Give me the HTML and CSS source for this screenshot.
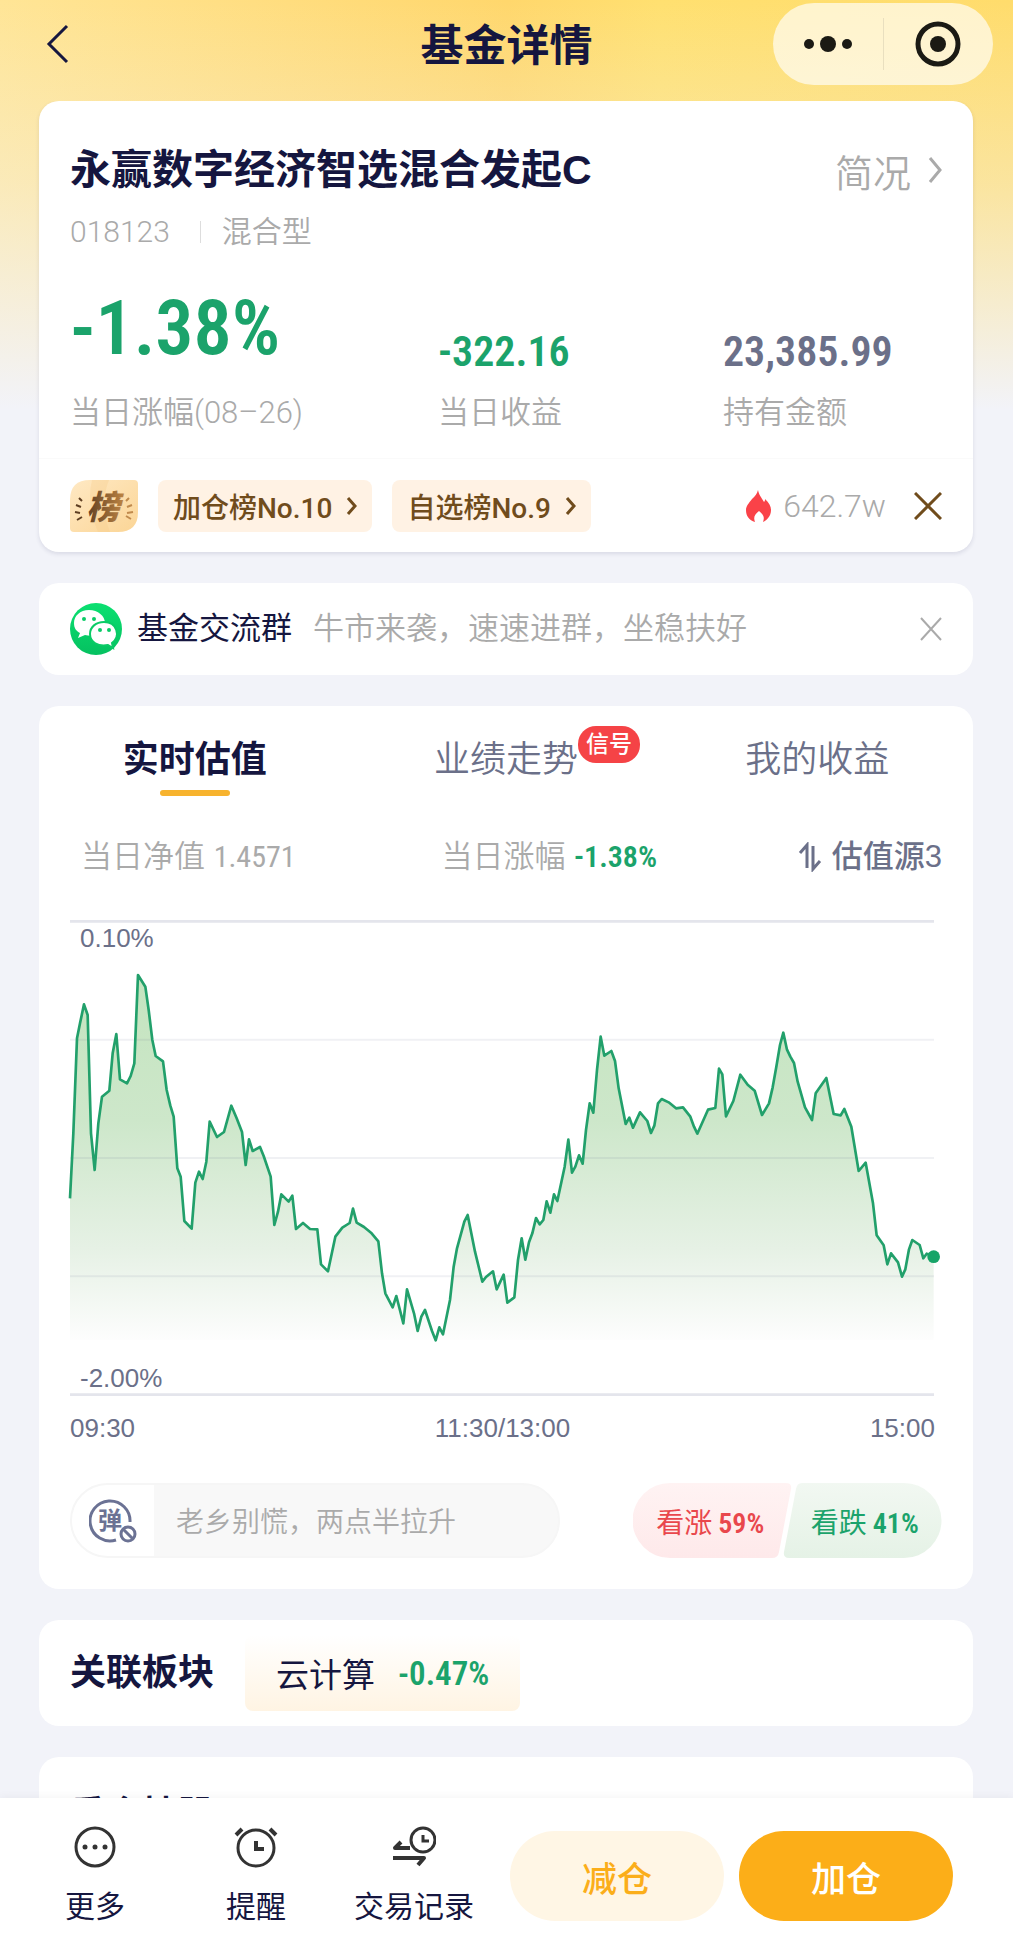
FILE: index.html
```html
<!DOCTYPE html>
<html lang="zh-CN">
<head>
    <meta charset="UTF-8">
    <meta name="viewport" content="width=device-width, initial-scale=1.0">
    <title>基金详情</title>
    <link rel="stylesheet" href="styles.css">
</head>
<body>

<header class="topbar">
    <button type="button" class="back" aria-label="返回">
        <svg width="24" height="40" viewBox="0 0 24 40"><path d="M21 2 3 20l18 18" fill="none" stroke="#15163f" stroke-width="3"/></svg>
    </button>
    <h1>基金详情</h1>
    <div class="capsule">
        <button type="button" aria-label="菜单">
            <svg width="50" height="20" viewBox="0 0 50 20" fill="#1b1a14"><circle cx="6" cy="10" r="5"/><circle cx="25" cy="10" r="8"/><circle cx="44" cy="10" r="5"/></svg>
        </button>
        <button type="button" aria-label="关闭小程序">
            <svg width="46" height="46" viewBox="0 0 46 46"><circle cx="23" cy="23" r="20" fill="none" stroke="#1b1a14" stroke-width="5"/><circle cx="23" cy="23" r="8" fill="#1b1a14"/></svg>
        </button>
    </div>
</header>

<main>
    <section class="card fund">
        <div class="fund-head">
            <h2>永赢数字经济智选混合发起C</h2>
            <a href="#profile">简况
                <svg width="14" height="28" viewBox="0 0 14 28"><path d="M2 2l10 12L2 26" fill="none" stroke="#aaa" stroke-width="3"/></svg>
            </a>
        </div>
        <p class="fund-code"><span>018123</span><span>混合型</span></p>
        <dl class="fund-stats">
            <div>
                <dt>当日涨幅(08–26)</dt>
                <dd class="num big down">-1.38%</dd>
            </div>
            <div>
                <dt>当日收益</dt>
                <dd class="num down">-322.16</dd>
            </div>
            <div>
                <dt>持有金额</dt>
                <dd class="num">23,385.99</dd>
            </div>
        </dl>
        <div class="ranks">
            <svg class="rank-badge" width="68" height="52" viewBox="0 0 68 52">
                <defs>
                    <linearGradient id="badgeBg" x1="0" y1="0" x2="1" y2="1"><stop offset="0" stop-color="#ffe9c4"/><stop offset="1" stop-color="#fbd596"/></linearGradient>
                    <linearGradient id="badgeText"><stop offset="0" stop-color="#5f3f22"/><stop offset="1" stop-color="#bd8443"/></linearGradient>
                </defs>
                <path d="M20 0h44q4 0 4 4v28q0 20-20 20H4q-4 0-4-4V20Q0 0 20 0z" fill="url(#badgeBg)"/>
                <path d="M22 0h17q-10 26 1 52H28Q16 24 22 0z" fill="#f5c987" opacity=".3"/>
                <path d="M9 18l3 3M6 25l5 2M5 32l5 1M7 40l5-3" stroke="#5f3f22" stroke-width="2"/>
                <path d="M59 18l-3 3M62 25l-5 2M63 32l-6 1M61 39l-5-3" stroke="#c08a4d" stroke-width="2"/>
                <text x="33" y="39" text-anchor="middle" fill="url(#badgeText)">榜</text>
            </svg>
            <a class="rank" href="#rank-add">加仓榜No.10
                <svg width="11" height="18" viewBox="0 0 11 18"><path d="M2 1l7 8-7 8" fill="none" stroke="#704c1c" stroke-width="3"/></svg>
            </a>
            <a class="rank" href="#rank-pick">自选榜No.9
                <svg width="11" height="18" viewBox="0 0 11 18"><path d="M2 1l7 8-7 8" fill="none" stroke="#704c1c" stroke-width="3"/></svg>
            </a>
            <span class="heat">
                <svg width="26" height="32" viewBox="0 0 26 32"><path d="M12 0c1 5 3 7 6 12 1-1 1-2 1-3 4 4 6 7 6 11 0 6-4 10-8 12 2-5 0-8-4-11-4 3-6 6-4 11C3 30 0 26 0 20c0-4 3-7 6-11 3-3 5-5 6-9z" fill="#fa4248"/></svg>
                642.7w
            </span>
            <button type="button" class="close" aria-label="关闭榜单">
                <svg width="28" height="28" viewBox="0 0 28 28"><path d="M1 1l26 26M27 1 1 27" stroke="#704c1c" stroke-width="3"/></svg>
            </button>
        </div>
    </section>

    <section class="card group">
        <svg width="52" height="52" viewBox="0 0 52 52">
            <defs><linearGradient id="wx" x1="0" y1="0" x2="0" y2="1"><stop offset="0" stop-color="#0be071"/><stop offset="1" stop-color="#05c160"/></linearGradient></defs>
            <circle cx="26" cy="26" r="26" fill="url(#wx)"/>
            <path d="M19 7C10 7 4 13 4 20c0 5 2 8 6 10l-2 5 7-3c11 3 20-3 20-12 0-7-7-13-16-13z" fill="#fff"/>
            <path d="M34 19c-8 0-14 5-14 12 0 8 8 13 18 11l5 3-1-5c9-7 5-21-8-21z" fill="#fff" stroke="#0acb66" stroke-width="2"/>
            <g fill="#0acb66"><circle cx="14" cy="16" r="2"/><circle cx="24" cy="16" r="2"/><circle cx="30" cy="27" r="2"/><circle cx="39" cy="27" r="2"/></g>
        </svg>
        <strong>基金交流群</strong>
        <span>牛市来袭，速速进群，坐稳扶好</span>
        <button type="button" class="close" aria-label="关闭">
            <svg width="22" height="24" viewBox="0 0 22 24"><path d="M1 1l20 22M21 1 1 23" stroke="#aaa" stroke-width="2"/></svg>
        </button>
    </section>

    <section class="card trend">
        <nav class="tabs">
            <button type="button" class="active">实时估值</button>
            <button type="button"><span class="tab-name">业绩走势<i class="signal">信号</i></span></button>
            <button type="button">我的收益</button>
        </nav>
        <div class="quote">
            <p>当日净值 <span class="num">1.4571</span></p>
            <p>当日涨幅 <span class="num down">-1.38%</span></p>
            <button type="button" class="source">
                <svg width="24" height="30" viewBox="0 0 24 30"><path d="M2 11l7-8v23M15 4v23l7-8" fill="none" stroke="#6b7089" stroke-width="3"/></svg>
                估值源3
            </button>
        </div>
        <div class="chart">
            <span class="max">0.10%</span>
            <span class="min">-2.00%</span>
            <svg viewBox="30 60 2595 1428">
                <defs>
                    <linearGradient id="area" gradientUnits="userSpaceOnUse" x1="0" y1="225" x2="0" y2="1320">
                        <stop offset="0" stop-color="#c4e4bf"/>
                        <stop offset=".4" stop-color="#cde7ca"/>
                        <stop offset=".75" stop-color="#e6f1e5"/>
                        <stop offset="1" stop-color="#fdfdfd"/>
                    </linearGradient>
                </defs>
                <polygon fill="url(#area)" points="30,1320 30,895 40,700 51,415 60,370 72,313 83,345 93,700 104,810 115,670 126,590 148,572 158,460 169,402 180,538 201,550 212,528 223,490 234,225 256,260 266,330 277,420 287,468 309,484 320,570 331,617 341,650 352,805 362,830 373,963 395,986 406,848 417,815 428,837 439,785 449,665 471,711 492,696 514,617 530,655 546,696 557,795 567,718 578,753 600,741 611,768 632,830 643,975 654,935 664,883 686,905 697,887 708,987 729,969 750,987 772,988 783,1093 804,1114 826,1010 847,983 869,969 879,926 890,968 912,981 933,998 955,1024 966,1120 976,1180 998,1222 1009,1188 1030,1270 1041,1168 1062,1240 1073,1293 1084,1250 1095,1230 1116,1293 1127,1321 1138,1282 1149,1303 1170,1200 1181,1100 1191,1045 1213,965 1223,945 1245,1055 1267,1145 1278,1131 1299,1114 1310,1168 1331,1124 1342,1208 1363,1192 1374,1080 1385,1015 1396,1079 1407,1027 1417,1000 1428,954 1439,973 1450,960 1460,904 1471,938 1482,883 1492,903 1514,800 1525,719 1536,818 1546,800 1557,766 1568,791 1578,690 1589,610 1600,638 1611,510 1622,410 1633,467 1654,453 1665,483 1676,565 1697,672 1708,653 1719,683 1740,637 1762,663 1773,699 1783,677 1794,610 1805,597 1826,607 1848,625 1869,622 1891,650 1902,680 1912,701 1944,629 1966,624 1977,506 1987,523 1998,649 2020,603 2041,524 2063,554 2084,572 2106,645 2127,610 2138,562 2149,500 2160,435 2170,398 2181,449 2191,470 2202,489 2213,545 2235,622 2256,660 2267,580 2299,534 2321,642 2342,646 2353,627 2374,680 2396,813 2417,788 2439,910 2450,1006 2471,1036 2482,1093 2493,1060 2514,1087 2526,1130 2536,1108 2547,1048 2557,1020 2579,1035 2590,1075 2600,1061 2621,1070 2621,1320"/>
                <g stroke="#5a5f82" stroke-opacity=".09" stroke-width="6">
                    <path d="M30 419h2592M30 774h2592M30 1129h2592"/>
                </g>
                <path d="M30 64h2592M30 1484h2592" stroke="#e4e5ec" stroke-width="8"/>
                <polyline fill="none" stroke="#22a06b" stroke-width="8" stroke-linejoin="round" points="30,895 40,700 51,415 60,370 72,313 83,345 93,700 104,810 115,670 126,590 148,572 158,460 169,402 180,538 201,550 212,528 223,490 234,225 256,260 266,330 277,420 287,468 309,484 320,570 331,617 341,650 352,805 362,830 373,963 395,986 406,848 417,815 428,837 439,785 449,665 471,711 492,696 514,617 530,655 546,696 557,795 567,718 578,753 600,741 611,768 632,830 643,975 654,935 664,883 686,905 697,887 708,987 729,969 750,987 772,988 783,1093 804,1114 826,1010 847,983 869,969 879,926 890,968 912,981 933,998 955,1024 966,1120 976,1180 998,1222 1009,1188 1030,1270 1041,1168 1062,1240 1073,1293 1084,1250 1095,1230 1116,1293 1127,1321 1138,1282 1149,1303 1170,1200 1181,1100 1191,1045 1213,965 1223,945 1245,1055 1267,1145 1278,1131 1299,1114 1310,1168 1331,1124 1342,1208 1363,1192 1374,1080 1385,1015 1396,1079 1407,1027 1417,1000 1428,954 1439,973 1450,960 1460,904 1471,938 1482,883 1492,903 1514,800 1525,719 1536,818 1546,800 1557,766 1568,791 1578,690 1589,610 1600,638 1611,510 1622,410 1633,467 1654,453 1665,483 1676,565 1697,672 1708,653 1719,683 1740,637 1762,663 1773,699 1783,677 1794,610 1805,597 1826,607 1848,625 1869,622 1891,650 1902,680 1912,701 1944,629 1966,624 1977,506 1987,523 1998,649 2020,603 2041,524 2063,554 2084,572 2106,645 2127,610 2138,562 2149,500 2160,435 2170,398 2181,449 2191,470 2202,489 2213,545 2235,622 2256,660 2267,580 2299,534 2321,642 2342,646 2353,627 2374,680 2396,813 2417,788 2439,910 2450,1006 2471,1036 2482,1093 2493,1060 2514,1087 2526,1130 2536,1108 2547,1048 2557,1020 2579,1035 2590,1075 2600,1061 2621,1070"/>
                <circle cx="2621" cy="1070" r="19" fill="#17a468"/>
            </svg>
        </div>
        <div class="times"><span>09:30</span><span>11:30/13:00</span><span>15:00</span></div>
        <div class="talk">
            <div class="danmu">
                <button type="button" aria-label="关闭弹幕">
                    <svg width="48" height="44" viewBox="0 0 48 44" fill="none" stroke="#6b7294" stroke-width="3">
                        <path d="M27 41A20 20 0 1 1 41 23"/>
                        <circle cx="39" cy="35" r="7"/>
                        <path d="M34 30l10 10"/>
                        <text x="21" y="30" text-anchor="middle" fill="#6b7294" stroke="none">弹</text>
                    </svg>
                </button>
                <input type="text" placeholder="老乡别慌，两点半拉升" aria-label="发弹幕">
            </div>
            <div class="vote">
                <svg viewBox="0 0 309 75" preserveAspectRatio="none">
                    <defs>
                        <linearGradient id="up" x1="0" y1="0" x2="0" y2="1"><stop offset="0" stop-color="#fff3f3"/><stop offset="1" stop-color="#fee9ea"/></linearGradient>
                        <linearGradient id="fall" x1="0" y1="0" x2="0" y2="1"><stop offset="0" stop-color="#f2f8f2"/><stop offset="1" stop-color="#e5f2e6"/></linearGradient>
                    </defs>
                    <path d="M37 0h116q6 0 5 6l-12 63q-1 6-7 6H37a37 37 0 0 1 0-75z" fill="url(#up)"/>
                    <path d="M169 0h102a37 37 0 0 1 0 75H156q-6 0-5-6l12-63q1-6 6-6z" fill="url(#fall)"/>
                </svg>
                <button type="button" class="rise">看涨<span class="num">59%</span></button>
                <button type="button" class="down">看跌<span class="num">41%</span></button>
            </div>
        </div>
    </section>

    <section class="card sector">
        <h3>关联板块</h3>
        <a href="#cloud">云计算 <span class="num down">-0.47%</span></a>
    </section>

    <section class="card holdings">
        <h3>重仓持股</h3>
    </section>
</main>

<footer class="actions">
    <button type="button" class="tool">
        <svg width="44" height="42" viewBox="0 0 44 42"><circle cx="22" cy="21" r="19" fill="none" stroke="#333" stroke-width="3"/><g fill="#333"><circle cx="12" cy="21" r="2.5"/><circle cx="22" cy="21" r="2.5"/><circle cx="32" cy="21" r="2.5"/></g></svg>
        更多
    </button>
    <button type="button" class="tool">
        <svg width="44" height="42" viewBox="0 0 44 42" fill="none" stroke="#333" stroke-width="3"><circle cx="22" cy="22" r="18"/><path d="M22 15v8h8" stroke-width="4"/><path d="M2 9l6-6M36 3l6 6" stroke-width="4"/></svg>
        提醒
    </button>
    <button type="button" class="tool wide">
        <svg width="44" height="42" viewBox="0 0 44 42" fill="none" stroke="#333" stroke-width="3"><circle cx="31" cy="14" r="12"/><path d="M31 9v6h6"/><path d="M18 22H3l6-6M1 32h31l-6 7" stroke-width="4" stroke-linejoin="round"/></svg>
        交易记录
    </button>
    <button type="button" class="trade sell">减仓</button>
    <button type="button" class="trade buy">加仓</button>
</footer>

</body>
</html>
```
FILE: styles.css
```css
* {
    box-sizing: border-box;
}

body {
    margin: 0;
    height: 100vh;
    display: flex;
    flex-direction: column;
    font-family: "Liberation Sans", "Noto Sans CJK SC", sans-serif;
    font-size: 30px;
    color: #15163f;
    background: linear-gradient(to bottom, rgba(242, 243, 249, 0), rgba(242, 243, 249, 0.35) 180px, #f2f3f9 410px),
        linear-gradient(to right, #ffe596, #ffd76c 50%, #ffe070 65%, #ffdc6c);
}

h1, h2, h3, p, dl, dd {
    margin: 0;
}

button {
    padding: 0;
    border: none;
    background: none;
    font: inherit;
    color: inherit;
    cursor: pointer;
}

a {
    color: inherit;
    text-decoration: none;
}

svg {
    display: block;
    flex: none;
}

/* Condensed figures for prices and rates */
.num {
    font-family: "Roboto Condensed", "Liberation Sans Narrow", Roboto, sans-serif;
    font-weight: 600;
}

.num.down, .down {
    color: #1ba36b;
}

/* Top bar */
.topbar {
    flex: none;
    display: grid;
    grid-template-columns: 1fr auto 1fr;
    align-items: center;
    padding: 3px 20px 16px 46px;
}

.topbar h1 {
    padding: 4px 26px 0 0;
    font-size: 43px;
    line-height: 64px;
    font-weight: 700;
}

.back {
    justify-self: start;
}

.capsule {
    justify-self: end;
    display: flex;
    align-items: center;
    width: 220px;
    height: 82px;
    border-radius: 41px;
    background: rgba(255, 255, 255, 0.65);
}

.capsule button {
    flex: 1;
    display: flex;
    justify-content: center;
}

.capsule button + button {
    padding: 3px 0;
    border-left: 1px solid #e9dfbf;
}

/* Cards */
main {
    flex: 1;
    min-height: 0;
    overflow-y: auto;
    scrollbar-width: none;
    padding: 0 40px 0 39px;
    display: flex;
    flex-direction: column;
    gap: 31px;
}

.card {
    flex: none;
    border-radius: 20px;
    background: #fff;
}

.fund {
    padding-top: 41px;
    box-shadow: 0 2px 4px rgba(40, 40, 90, 0.12);
}

.fund-head {
    display: flex;
    justify-content: space-between;
    align-items: center;
    padding: 0 31px;
}

.fund-head h2 {
    font-size: 41px;
    line-height: 56px;
    font-weight: 700;
}

.fund-head a {
    display: flex;
    align-items: center;
    gap: 17px;
    font-size: 38px;
    font-weight: 350;
    color: #aaa;
}

/* Light grey captions */
.fund-code, .fund-stats dt, .heat {
    font-family: Roboto, "Noto Sans CJK SC", sans-serif;
    font-weight: 350;
    color: #aaa;
}

.fund-code {
    display: flex;
    align-items: center;
    margin-top: 16px;
    padding: 0 31px;
    font-size: 30px;
    line-height: 36px;
}

.fund-code span + span {
    margin-left: 30px;
    padding-left: 21px;
    line-height: 22px;
    border-left: 1px solid #ddd;
}

.fund-stats {
    display: grid;
    grid-template-columns: 368fr 285fr 219fr;
    align-items: end;
    padding: 38px 31px 25px;
}

.fund-stats div {
    display: flex;
    flex-direction: column-reverse;
}

.fund-stats dt {
    font-size: 31px;
    line-height: 40px;
}

.fund-stats dd {
    margin-bottom: 17px;
    font-size: 42px;
    line-height: 48px;
    color: #6b7089;
}

.fund-stats .big {
    margin-bottom: 25px;
    font-size: 76px;
    line-height: 80px;
}

.ranks {
    display: flex;
    align-items: center;
    height: 94px;
    padding: 0 31px;
    border-top: 1px solid #fafafa;
}

.rank-badge text {
    font-size: 33px;
    font-weight: 900;
    font-style: italic;
}

.rank {
    display: flex;
    align-items: center;
    gap: 14px;
    height: 52px;
    margin-left: 20px;
    padding: 0 15px;
    border-radius: 8px;
    background: #fff2e4;
    font-family: Roboto, "Noto Sans CJK SC", sans-serif;
    font-size: 28px;
    font-weight: 500;
    color: #704c1c;
}

.heat {
    display: flex;
    align-items: center;
    gap: 11px;
    margin-left: auto;
    font-size: 32px;
}

.ranks .close {
    margin-left: 28px;
}

/* Chat group */
.group {
    display: flex;
    align-items: center;
    height: 92px;
    padding: 0 31px;
    font-size: 31px;
    line-height: 36px;
}

.group strong {
    margin: 0 21px 0 15px;
    font-weight: 400;
}

.group span {
    font-weight: 350;
    color: #aaa;
}

.group .close {
    margin-left: auto;
}

/* Valuation */
.trend {
    padding: 20px 0 31px;
}

.tabs {
    display: grid;
    grid-template-columns: repeat(3, 1fr);
    font-size: 36px;
    line-height: 68px;
    font-weight: 350;
    color: #6b7089;
}

.tabs button {
    display: flex;
    flex-direction: column;
    align-items: center;
    height: 70px;
}

.tabs .active {
    font-weight: 700;
    color: #15163f;
}

.tabs .active::after {
    content: "";
    width: 70px;
    height: 6px;
    margin-top: -4px;
    border-radius: 3px;
    background: #f7b32e;
}

.tab-name {
    position: relative;
}

.signal {
    position: absolute;
    left: 100%;
    top: 0;
    width: 62px;
    border-radius: 18px;
    background: #f54346;
    font-size: 23px;
    line-height: 37px;
    font-style: normal;
    font-weight: 500;
    color: #fff;
}

.quote {
    display: grid;
    grid-template-columns: 360fr 300fr 200fr;
    align-items: center;
    padding: 37px 31px 39px 42px;
    font-size: 31px;
    line-height: 48px;
    font-weight: 350;
    color: #aaa;
}

.quote .num {
    font-size: 30px;
}

.quote p:first-child .num {
    font-weight: 400;
}

.source {
    justify-self: end;
    display: flex;
    align-items: center;
    gap: 10px;
    font-weight: 500;
    color: #6b7089;
}

.chart {
    position: relative;
    margin: 0 38px 0 31px;
    font-size: 26px;
    line-height: 36px;
    color: #6b7089;
}

.chart svg {
    width: 100%;
    height: auto;
    overflow: visible;
}

.chart span {
    position: absolute;
    left: 10px;
}

.max {
    top: 0;
}

.min {
    bottom: 0;
}

.times {
    display: flex;
    justify-content: space-between;
    padding: 14px 38px 37px 31px;
    font-size: 26px;
    line-height: 36px;
    color: #6b7089;
}

.talk {
    display: flex;
    justify-content: space-between;
    padding: 0 31px;
}

.danmu {
    display: flex;
    flex: 0 1 490px;
    height: 75px;
    border: 2px solid #f6f6f6;
    border-radius: 38px;
    background: #f8f8f8;
    overflow: hidden;
}

.danmu button {
    display: flex;
    align-items: center;
    padding: 0 17px;
    background: #fff;
}

.danmu text {
    font-size: 24px;
    font-weight: 700;
}

.danmu input {
    flex: 1;
    min-width: 0;
    padding: 4px 22px 0;
    border: none;
    outline: none;
    background: none;
    font: inherit;
    font-size: 28px;
    font-weight: 350;
}

.danmu input::placeholder {
    color: #aaa;
}

.vote {
    position: relative;
    display: grid;
    grid-template-columns: 1fr 1fr;
    width: 309px;
    height: 75px;
    font-size: 28px;
}

.vote svg {
    position: absolute;
    inset: 0;
    width: 100%;
    height: 100%;
}

.vote button {
    position: relative;
}

.vote .num {
    margin-left: 6px;
}

.rise {
    color: #e9474c;
}

/* Related sector */
.sector {
    display: flex;
    align-items: center;
    gap: 31px;
    height: 106px;
    padding: 0 31px;
}

.sector h3, .holdings h3 {
    font-size: 36px;
    line-height: 54px;
    font-weight: 700;
}

.sector a {
    display: flex;
    align-items: center;
    gap: 23px;
    height: 76px;
    padding: 0 31px;
    border-radius: 8px;
    background: linear-gradient(#fff, #fff4e3);
    font-size: 33px;
}

.holdings {
    padding: 31px;
}

/* Bottom actions */
.actions {
    position: relative;
    flex: none;
    display: flex;
    align-items: flex-start;
    padding: 28px 60px 26px 47px;
    background: #fff;
    box-shadow: 0 -2px 8px rgba(0, 0, 0, 0.04);
}

.tool {
    display: flex;
    flex-direction: column;
    align-items: center;
    gap: 16px;
    width: 96px;
    margin-right: 65px;
    font-size: 30px;
    line-height: 46px;
}

.tool.wide {
    width: 124px;
    margin: 0 34px 0 -17px;
}

.trade {
    flex: 1;
    height: 90px;
    margin-top: 5px;
    border-radius: 45px;
    font-size: 35px;
    font-weight: 500;
}

.sell {
    margin-right: 15px;
    background: #fff6e5;
    color: #fbae1a;
}

.buy {
    background: #fcae18;
    color: #fff;
}
```
